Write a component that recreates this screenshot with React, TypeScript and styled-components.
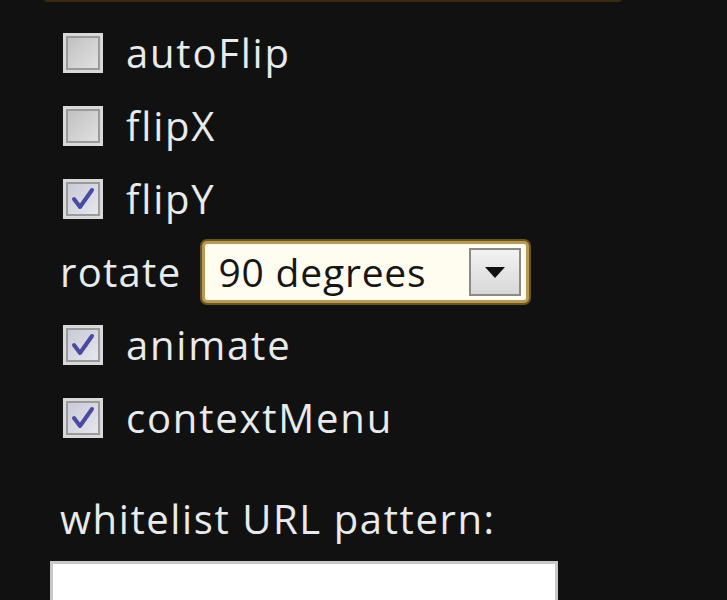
import React from "react";
import styled, { createGlobalStyle } from "styled-components";

const Global = createGlobalStyle`
  html, body { margin: 0; padding: 0; background: #111111; }
  body { width: 727px; height: 600px; overflow: hidden; }
`;

const Page = styled.div`
  position: relative;
  width: 727px;
  height: 600px;
  background: #111111;
  font-family: "Open Sans", "Noto Sans", sans-serif;
  color: #e8eaec;
  overflow: hidden;
`;

const TopEdge = styled.div`
  margin-left: 44px;
  width: 578px;
  height: 3px;
  margin-top: -1px;
  background: #3a2a12;
  border-radius: 0 0 4px 4px;
`;

const Form = styled.div`
  display: flex;
  flex-direction: column;
  padding: 14px 0 0 60px;
`;

const Row = styled.label`
  display: flex;
  align-items: center;
  height: 73px;
  gap: 23px;
  padding-left: 3px;
  font-size: 40px;
  letter-spacing: 1.8px;
`;

const Box = styled.span<{ $checked?: boolean }>`
  box-sizing: border-box;
  width: 40px;
  height: 40px;
  border: 3px solid #d9d9d9;
  box-shadow: inset 0 0 0 2px #9a9a9a;
  background: ${(p) =>
    p.$checked
      ? "linear-gradient(135deg, #c8c8d6 0%, #e8e8f0 100%)"
      : "linear-gradient(135deg, #bfbfbf 0%, #e2e2e2 100%)"};
  display: flex;
  align-items: center;
  justify-content: center;
  flex-shrink: 0;
`;

const RotateRow = styled.div`
  display: flex;
  align-items: center;
  height: 73px;
  gap: 21px;
  font-size: 40px;
  letter-spacing: 1.3px;
`;

const Select = styled.div`
  box-sizing: border-box;
  width: 327px;
  height: 62px;
  border: 3px solid #b89a55;
  border-radius: 5px;
  box-shadow: 0 0 0 2px #6a5424;
  background: #fffdf0;
  display: flex;
  align-items: center;
  justify-content: space-between;
  padding: 0 5px 0 13px;
  color: #161616;
  font-size: 39px;
  letter-spacing: 0.8px;
`;

const DropBtn = styled.span`
  box-sizing: border-box;
  width: 52px;
  height: 48px;
  border: 2px solid #8a8a8a;
  background: linear-gradient(180deg, #f2f2f2 0%, #d8d8d8 100%);
  display: flex;
  align-items: center;
  justify-content: center;
`;

const Label = styled.div`
  margin-top: 40px;
  font-size: 40px;
  letter-spacing: 1.6px;
  line-height: 50px;
`;

const TextBox = styled.div`
  box-sizing: border-box;
  margin: 17px 0 0 -10px;
  width: 508px;
  height: 60px;
  background: #ffffff;
  border: 3px solid #c8c8c8;
  border-bottom: none;
`;

const Check = () => (
  <svg width="28" height="28" viewBox="0 0 28 28">
    <path
      d="M5 14 L11 22 L23 5"
      fill="none"
      stroke="#4a4a9e"
      strokeWidth="4"
      strokeLinecap="round"
      strokeLinejoin="round"
    />
  </svg>
);

const Arrow = () => (
  <svg width="22" height="14" viewBox="0 0 22 14">
    <path d="M1 2 L21 2 L11 13 Z" fill="#111" />
  </svg>
);

const CheckRow = ({ label, checked }: { label: string; checked?: boolean }) => (
  <Row>
    <Box $checked={checked}>{checked && <Check />}</Box>
    <span>{label}</span>
  </Row>
);

export default function App() {
  return (
    <Page>
      <Global />
      <TopEdge />
      <Form>
        <CheckRow label="autoFlip" />
        <CheckRow label="flipX" />
        <CheckRow label="flipY" checked />
        <RotateRow>
          <span>rotate</span>
          <Select>
            <span>90 degrees</span>
            <DropBtn>
              <Arrow />
            </DropBtn>
          </Select>
        </RotateRow>
        <CheckRow label="animate" checked />
        <CheckRow label="contextMenu" checked />
        <Label>whitelist URL pattern:</Label>
        <TextBox />
      </Form>
    </Page>
  );
}
